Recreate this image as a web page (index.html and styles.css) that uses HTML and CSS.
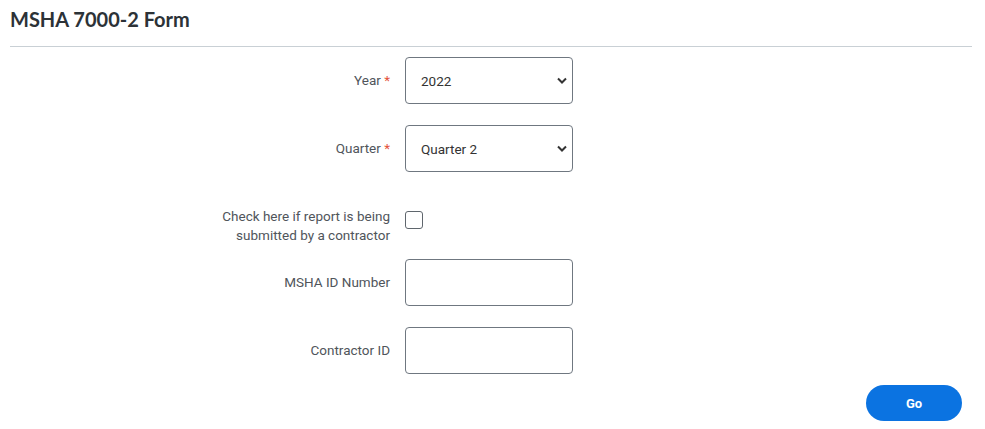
FILE: index.html
```html
<!DOCTYPE html>
<html lang="en">
<head>
    <meta charset="UTF-8">
    <meta name="viewport" content="width=device-width, initial-scale=1.0">
    <title>MSHA 7000-2 Form</title>
    <link rel="stylesheet" href="styles.css">
</head>
<body>
    <div class="page">
        <h1 class="page-title">MSHA 7000-2 Form</h1>

        <form class="report-form">
            <label class="field-label" for="year">Year <span class="req">*</span></label>
            <select id="year" class="field-select">
                <option>2022</option>
                <option>2021</option>
            </select>

            <label class="field-label" for="quarter">Quarter <span class="req">*</span></label>
            <select id="quarter" class="field-select">
                <option>Quarter 2</option>
                <option>Quarter 1</option>
            </select>

            <label class="field-label field-label-multi" for="contractor">Check here if report is being<br>submitted by a contractor</label>
            <div class="check-cell">
                <input type="checkbox" id="contractor" class="field-check">
            </div>

            <label class="field-label" for="mshaId">MSHA ID Number</label>
            <input type="text" id="mshaId" class="field-input">

            <label class="field-label" for="contractorId">Contractor ID</label>
            <input type="text" id="contractorId" class="field-input">
        </form>

        <div class="actions">
            <button type="button" class="go-btn">Go</button>
        </div>
    </div>
</body>
</html>
```

FILE: styles.css
```css
body {
    margin: 0;
    font-family: Roboto, "Liberation Sans", Arial, sans-serif;
    background-color: #ffffff;
    color: #3b4148;
}
.page {
    width: 962px;
    padding: 0 0 0 10px;
}
.page-title {
    font-family: Lato, "Liberation Sans", sans-serif;
    font-weight: bold;
    font-size: 20px;
    line-height: 24px;
    color: #2c3237;
    margin: 0;
    padding: 7px 0 15px;
    border-bottom: 1px solid #c9d0d5;
}
.report-form {
    display: grid;
    grid-template-columns: 380px 168px;
    column-gap: 15px;
    row-gap: 21px;
    align-items: center;
    margin-top: 10px;
}
.field-label {
    text-align: right;
    font-size: 13.5px;
    line-height: 19px;
    color: #50555b;
}
.field-label-multi {
    align-self: start;
    padding-top: 14px;
    margin-bottom: -20px;
}
.req {
    color: #e4533c;
}
.field-select,
.field-input {
    box-sizing: border-box;
    width: 168px;
    height: 47px;
    border: 1px solid #6f7780;
    border-radius: 4px;
    background-color: #fff;
    font-family: Roboto, "Liberation Sans", sans-serif;
    font-size: 13.5px;
    color: #333;
    padding: 0 15px;
}
.field-select {
    appearance: none;
    -webkit-appearance: none;
    background-image: url("data:image/svg+xml,%3Csvg xmlns='http://www.w3.org/2000/svg' width='10' height='7' viewBox='0 0 10 7'%3E%3Cpath d='M1 1.5l4 4 4-4' fill='none' stroke='%23333' stroke-width='2'/%3E%3C/svg%3E");
    background-repeat: no-repeat;
    background-position: right 5px center;
}
.check-cell {
    align-self: start;
    height: 45px;
}
.field-check {
    appearance: none;
    -webkit-appearance: none;
    box-sizing: border-box;
    width: 18px;
    height: 18px;
    margin: 18px 0 0 0;
    border: 1px solid #5f666d;
    border-radius: 3px;
    background-color: #fff;
}
.actions {
    display: flex;
    justify-content: flex-end;
    padding-top: 11px;
    padding-right: 10px;
}
.go-btn {
    width: 96px;
    height: 36px;
    border: none;
    border-radius: 18px;
    background-color: #0b73e1;
    color: #ffffff;
    font-family: Roboto, "Liberation Sans", sans-serif;
    font-weight: bold;
    font-size: 13px;
    cursor: pointer;
}
```
